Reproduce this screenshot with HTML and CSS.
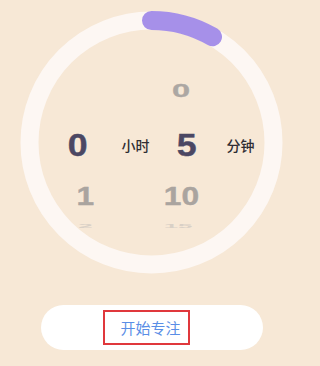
FILE: index.html
```html
<!DOCTYPE html>
<html lang="zh">
<head>
<meta charset="utf-8">
<link rel="stylesheet" href="styles.css">
</head>
<body>
<div class="page">
  <div class="dial">
    <svg class="ring" viewBox="0 0 263 263" width="263" height="263">
      <circle cx="131.5" cy="131.5" r="122" fill="none" stroke="#fdf7f3" stroke-width="18"/>
      <path d="M131.5 9.5 A122 122 0 0 1 192.5 25.85" fill="none" stroke="#a690e9" stroke-width="19" stroke-linecap="round"/>
    </svg>
    <div class="picker">
      <div class="cell hour"></div>
      <div class="cell lbl"></div>
      <div class="cell min m-off"><span class="d far1">0</span></div>
      <div class="cell lbl"></div>

      <div class="cell hour h-sel"><span class="d sel">0</span></div>
      <div class="cell lbl">小时</div>
      <div class="cell min m-sel"><span class="d sel">5</span></div>
      <div class="cell lbl">分钟</div>

      <div class="cell hour h-off"><span class="d near">1</span></div>
      <div class="cell lbl"></div>
      <div class="cell min m-off"><span class="d near">10</span></div>
      <div class="cell lbl"></div>

      <div class="cell hour h-off"><span class="d far2">2</span></div>
      <div class="cell lbl"></div>
      <div class="cell min m-far"><span class="d far2">15</span></div>
      <div class="cell lbl"></div>
    </div>
  </div>
  <button class="start"><span class="start-text">开始专注</span></button>
</div>
</body>
</html>
```
FILE: styles.css
```css
html, body {
  margin: 0;
  padding: 0;
  background: #f7e8d6;
}
body {
  width: 320px;
  height: 366px;
  overflow: hidden;
  font-family: "Liberation Sans", "Noto Sans CJK SC", sans-serif;
}
.page {
  width: 303px;
  display: flex;
  flex-direction: column;
  align-items: center;
}
.dial {
  position: relative;
  width: 263px;
  height: 263px;
  margin-top: 11px;
  box-sizing: border-box;
  padding-top: 57px;
  padding-left: 28px;
}
.ring {
  position: absolute;
  left: 0;
  top: 0;
}
.picker {
  position: relative;
  display: grid;
  grid-template-columns: 64px 47px 48px 67px;
  grid-template-rows: 44px 66px 36px 24px;
}
.cell {
  display: flex;
  align-items: center;
  justify-content: center;
  line-height: 1;
  box-sizing: border-box;
}
.h-sel { padding-right: 4px; }
.h-off { padding-left: 11px; }
.m-sel { padding-left: 8px; }
.m-off { padding-right: 4px; }
.m-far { padding-right: 10px; }
.lbl {
  font-family: "Noto Sans CJK SC", sans-serif;
  font-size: 14px;
  font-weight: 500;
  color: #2f2d33;
}
.d {
  display: inline-block;
  font-family: "Liberation Sans", sans-serif;
  font-weight: 700;
}
.sel {
  font-size: 31px;
  color: #4b4763;
  -webkit-text-stroke: 0.4px #4b4763;
  transform: scaleX(1.15);
}
.near {
  font-size: 26px;
  color: #aaa49f;
  -webkit-text-stroke: 0.4px #aaa49f;
  transform: scaleX(1.22);
}
.far1 {
  font-size: 25px;
  color: #aca7a3;
  -webkit-text-stroke: 0.4px #aca7a3;
  transform: scale(1.3, 0.72);
}
.far2 {
  font-size: 20px;
  color: #d9d0c6;
  transform: scale(1.3, 0.24);
}
.start {
  margin-top: 31px;
  width: 222px;
  height: 45px;
  border: none;
  border-radius: 23px;
  background: #ffffff;
  padding: 0;
  display: flex;
  align-items: center;
  justify-content: center;
}
.start-text {
  display: inline-block;
  margin-left: -10px;
  padding: 0 7px 0 15px;
  border: 2px solid #e0383c;
  line-height: 31px;
  font-family: "Noto Sans CJK SC", sans-serif;
  font-size: 15px;
  color: #5a8ee6;
}
```
